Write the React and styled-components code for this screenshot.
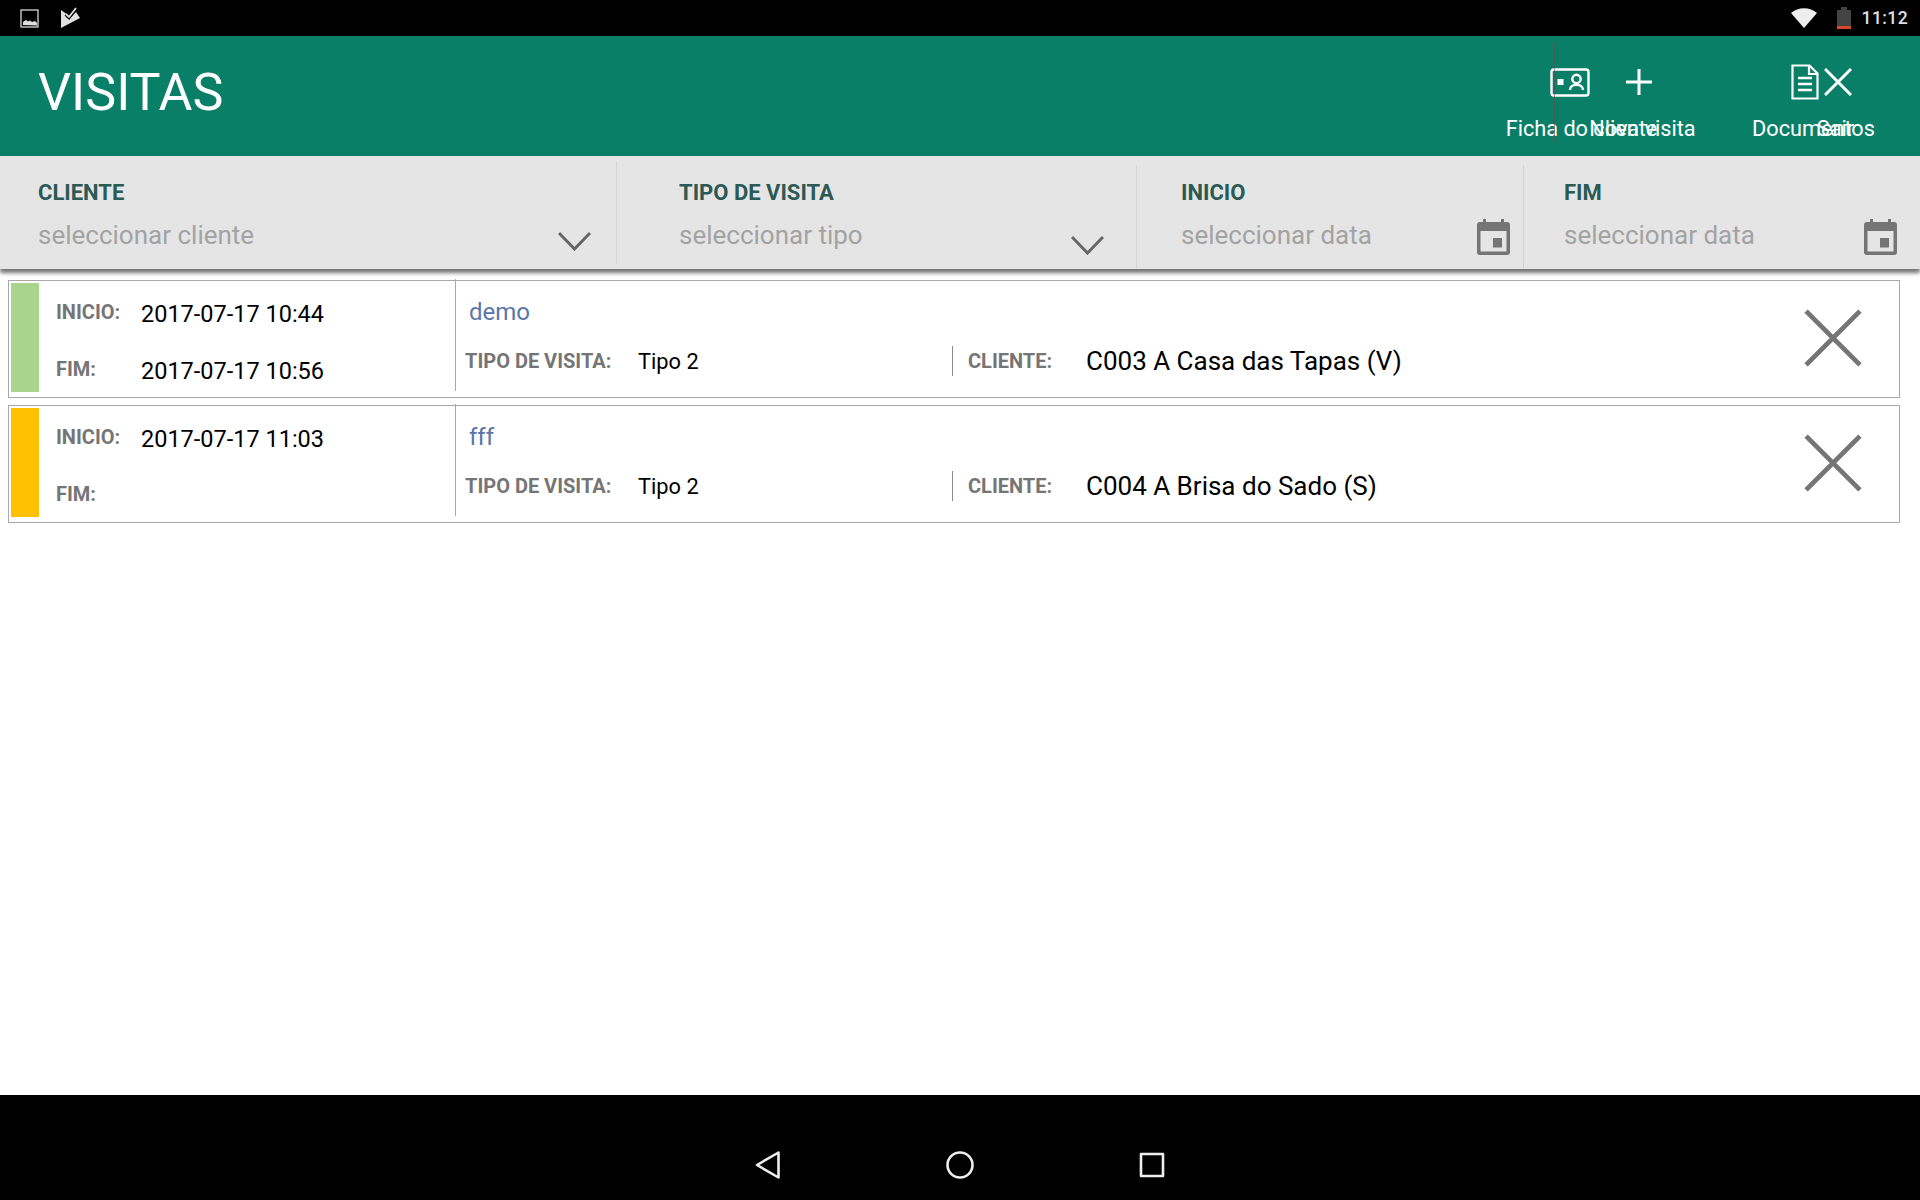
import React from 'react';
import styled, { createGlobalStyle } from 'styled-components';

const Global = createGlobalStyle`
  html, body { margin: 0; padding: 0; background: #fff; }
  * { box-sizing: border-box; }
`

const Screen = styled.div`
  width: 1920px;
  height: 1200px;
  display: flex;
  flex-direction: column;
  font-family: Roboto, sans-serif;
  background: #fff;
  overflow: hidden;
`

const StatusBar = styled.div`
  height: 36px;
  background: #000;
  display: flex;
  align-items: center;
  padding: 0 12px 0 20px;
  color: #e0e0e0;
`

const StatusLeft = styled.div`
  display: flex;
  align-items: center;
  gap: 21px;
  flex: 1;
`

const Clock = styled.span`
  font-size: 17.5px;
  font-weight: 500;
  margin-left: 11px;
  letter-spacing: 0.4px;
`

const Header = styled.header`
  position: relative;
  height: 120px;
  background: #0a7f68;
  display: flex;
  align-items: flex-start;
  color: #fff;
`

const Title = styled.h1`
  margin: 0;
  padding: 25px 0 0 38px;
  flex: 1;
  font-size: 52px;
  line-height: 64px;
  font-weight: 400;
`

const Seam = styled.div`
  position: absolute;
  left: 1554px;
  top: 6px;
  width: 1px;
  height: 100px;
  background: rgba(120, 60, 80, 0.55);
`

const Actions = styled.div`
  display: flex;
  padding-top: 28px;
  margin-right: 66px;
`

const Action = styled.div`
  width: ${p => p.$w}px;
  margin-right: ${p => p.$gap || 0}px;
  display: flex;
  flex-direction: column;
  align-items: center;
  font-size: 21.7px;
  line-height: 26px;
  white-space: nowrap;
`

const ActionIcon = styled.div`
  height: 52px;
  padding-top: ${p => p.$top}px;
  display: flex;
  align-items: flex-start;
  justify-content: center;
`

// the captions sit a little off-centre from their icons and run over each other
const Caption = styled.span`
  margin-left: ${p => Math.max(p.$shift * 2, 0)}px;
  margin-right: ${p => Math.max(-p.$shift * 2, 0)}px;
`

const FilterBar = styled.div`
  position: relative;
  height: 113px;
  background: #e5e5e5;
  display: flex;
  box-shadow: 0 4px 4px rgba(0, 0, 0, 0.55);
`

const Filter = styled.div`
  position: relative;
  width: ${p => p.$w}px;
  flex: ${p => (p.$w ? 'none' : 1)};
  padding: 24px 0 0 ${p => p.$pad}px;
  &::after {
    content: '';
    display: ${p => (p.$last ? 'none' : 'block')};
    position: absolute;
    right: 0;
    top: ${p => p.$lineTop}px;
    height: 103px;
    width: 1px;
    background: #d4d4d4;
  }
`

const FilterLabel = styled.div`
  font-size: 22px;
  line-height: 26px;
  font-weight: 700;
  color: #2b5a54;
`

const FilterValue = styled.div`
  margin-top: 11px;
  font-size: 26px;
  line-height: 36px;
  color: #a3a3a3;
`

const FilterIcon = styled.div`
  position: absolute;
  right: ${p => p.$right}px;
  top: ${p => p.$top}px;
  display: flex;
`

const List = styled.div`
  display: flex;
  flex-direction: column;
  gap: 7px;
  padding: 11px 20px 0 8px;
  flex: 1;
`

const Card = styled.div`
  height: 118px;
  border: 1.5px solid #a8a8a8;
  padding: 2px 0 5px 2px;
  display: flex;
`

const Status = styled.div`
  width: 28px;
  background: ${p => p.$color};
`

const Times = styled.div`
  position: relative;
  width: 417px;
  padding: 16px 0 0 17px;
  display: grid;
  grid-template-columns: 85px 1fr;
  grid-auto-rows: 57px;
  &::after {
    content: '';
    position: absolute;
    right: 0;
    top: -4px;
    bottom: 1px;
    width: 1px;
    background: #a8a8a8;
  }
`

const Label = styled.span`
  font-size: 20px;
  line-height: 26px;
  font-weight: 700;
  color: #757575;
  white-space: nowrap;
`

const TimeValue = styled.span`
  font-size: 23.5px;
  line-height: 30px;
  color: #000;
`

const Details = styled.div`
  flex: 1;
  padding: 13px 0 0 9px;
`

const Note = styled.div`
  padding-left: 4px;
  font-size: 24px;
  line-height: 32px;
  color: #5a76a8;
`

const InfoRow = styled.div`
  display: flex;
  align-items: center;
  margin-top: 18px;
  height: 30px;
`

const InfoLabel = styled(Label)`
  width: ${p => p.$w}px;
`

const TipoValue = styled.span`
  width: 315px;
  height: 100%;
  display: flex;
  align-items: center;
  font-size: 21.8px;
  color: #000;
  border-right: 1px solid #8a8a8a;
  margin-right: 15px;
`

const ClientValue = styled.span`
  font-size: 26px;
  color: #000;
`

const Remove = styled.div`
  width: 108px;
  display: flex;
  align-items: center;
  padding-left: 13px;
`

const NavBar = styled.nav`
  height: 105px;
  background: #000;
  display: flex;
  justify-content: center;
  gap: 162px;
  padding: 55px 0 0;
`

const ImageIcon = () => (
  <svg width="20" height="19" viewBox="0 0 20 19" fill="none">
    <rect x="1" y="1" width="17" height="17" stroke="#c8c8c8" strokeWidth="1.4" />
    <path d="M3 16v-3l3-2 2 1.5 2-1 2 1.5 3-1 2 2v2.5z" fill="#e0e0e0" />
  </svg>
)

const TaskIcon = () => (
  <svg width="20" height="22" viewBox="0 0 20 22" fill="none">
    <path d="M0 3l7 5-2 2 3 2 7-7 4 6L0 21z" fill="#e0e0e0" />
    <path d="M5 7l3 3 7-9" stroke="#000" strokeWidth="4" />
    <path d="M5 7l3 3 7-9" stroke="#e0e0e0" strokeWidth="1.8" />
  </svg>
)

const WifiIcon = () => (
  <svg width="26" height="20" viewBox="0 0 26 20">
    <path d="M0 5C7-1.5 19-1.5 26 5L13 20z" fill="#eee" />
  </svg>
)

const BatteryIcon = () => (
  <svg width="14" height="22" viewBox="0 0 14 22" style={{ marginLeft: 20 }}>
    <path d="M0 3h4V0h6v3h4v19H0z" fill="#444" />
    <rect y="19" width="14" height="3" fill="#d9472b" />
  </svg>
)

const CardIdIcon = () => (
  <svg width="40" height="29" viewBox="0 0 40 29" fill="none" stroke="#fff" strokeWidth="2.4">
    <rect x="1.5" y="1.5" width="37" height="26" rx="2.5" />
    <rect x="7.5" y="11" width="6" height="6" fill="#fff" stroke="none" />
    <circle cx="26.5" cy="11" r="4.2" />
    <path d="M20 22c0-7 13-7 13 0" />
  </svg>
)

const PlusIcon = () => (
  <svg width="28" height="28" viewBox="0 0 28 28" stroke="#fff" strokeWidth="3">
    <path d="M14 1v26M1 14h26" />
  </svg>
)

const DocIcon = () => (
  <svg width="28" height="36" viewBox="0 0 28 36" fill="none" stroke="#fff" strokeWidth="2.2">
    <path d="M1.5 1.5h17l8 8v25h-25z" />
    <path d="M18 2v8h8" />
    <path d="M7 14h14M7 20h14M7 26h14" strokeWidth="2.4" />
  </svg>
)

const CloseIcon = ({ size, stroke, width }) => (
  <svg width={size} height={size} viewBox="0 0 28 28" stroke={stroke} strokeWidth={width}>
    <path d="M1 1l26 26M27 1L1 27" />
  </svg>
)

const Chevron = () => (
  <svg width="33" height="20" viewBox="0 0 33 20" fill="none" stroke="#666" strokeWidth="3">
    <path d="M1 2l15.5 16L32 2" />
  </svg>
)

const CalendarIcon = () => (
  <svg width="33" height="36" viewBox="0 0 33 36">
    <path d="M6 0h3v3h15V0h3v3h3a3 3 0 0 1 3 3v27a3 3 0 0 1-3 3H3a3 3 0 0 1-3-3V6a3 3 0 0 1 3-3h3z" fill="#757575" />
    <rect x="3.5" y="12" width="26" height="20.5" fill="#e5e5e5" />
    <rect x="16" y="19" width="9" height="9.5" fill="#757575" />
  </svg>
)

const BackIcon = () => (
  <svg width="30" height="30" viewBox="0 0 30 30" fill="none" stroke="#eee" strokeWidth="2.6" strokeLinejoin="round">
    <path d="M25.5 2.5v25L4 15z" />
  </svg>
)

const HomeIcon = () => (
  <svg width="30" height="30" viewBox="0 0 30 30" fill="none" stroke="#eee" strokeWidth="2.6">
    <circle cx="15" cy="15" r="12.5" />
  </svg>
)

const RecentIcon = () => (
  <svg width="30" height="30" viewBox="0 0 30 30" fill="none" stroke="#eee" strokeWidth="2.6" strokeLinejoin="round">
    <rect x="4" y="4" width="22" height="22" />
  </svg>
)

const visits = [
  { id: 1, color: '#a9d48e', start: '2017-07-17 10:44', end: '2017-07-17 10:56', note: 'demo', type: 'Tipo 2', client: 'C003 A Casa das Tapas (V)' },
  { id: 2, color: '#ffc000', start: '2017-07-17 11:03', end: '', note: 'fff', type: 'Tipo 2', client: 'C004 A Brisa do Sado (S)' },
];

const App = () => {
  return (
    <Screen>
      <Global />
      <StatusBar>
        <StatusLeft>
          <ImageIcon />
          <TaskIcon />
        </StatusLeft>
        <WifiIcon />
        <BatteryIcon />
        <Clock>11:12</Clock>
      </StatusBar>
      <Header>
        <Title>VISITAS</Title>
        <Seam />
        <Actions>
          <Action $w={69}>
            <ActionIcon $top={4}><CardIdIcon /></ActionIcon>
            <Caption $shift={12}>Ficha do cliente</Caption>
          </Action>
          <Action $w={69} $gap={115}>
            <ActionIcon $top={4}><PlusIcon /></ActionIcon>
            <Caption $shift={4}>Nova visita</Caption>
          </Action>
          <Action $w={33}>
            <ActionIcon $top={0}><DocIcon /></ActionIcon>
            <Caption $shift={9}>Documentos</Caption>
          </Action>
          <Action $w={33}>
            <ActionIcon $top={4}><CloseIcon size={28} stroke="#fff" width={3} /></ActionIcon>
            <Caption $shift={-2}>Sair</Caption>
          </Action>
        </Actions>
      </Header>
      <FilterBar>
        <Filter $w={617} $pad={38} $lineTop={5}>
          <FilterLabel>CLIENTE</FilterLabel>
          <FilterValue>seleccionar cliente</FilterValue>
          <FilterIcon $right={26} $top={75}><Chevron /></FilterIcon>
        </Filter>
        <Filter $w={520} $pad={62} $lineTop={9}>
          <FilterLabel>TIPO DE VISITA</FilterLabel>
          <FilterValue>seleccionar tipo</FilterValue>
          <FilterIcon $right={33} $top={79}><Chevron /></FilterIcon>
        </Filter>
        <Filter $w={387} $pad={44} $lineTop={9}>
          <FilterLabel>INICIO</FilterLabel>
          <FilterValue>seleccionar data</FilterValue>
          <FilterIcon $right={14} $top={63}><CalendarIcon /></FilterIcon>
        </Filter>
        <Filter $pad={40} $last>
          <FilterLabel>FIM</FilterLabel>
          <FilterValue>seleccionar data</FilterValue>
          <FilterIcon $right={23} $top={63}><CalendarIcon /></FilterIcon>
        </Filter>
      </FilterBar>
      <List>
        {visits.map(v => (
          <Card key={v.id}>
            <Status $color={v.color} />
            <Times>
              <Label>INICIO:</Label>
              <TimeValue>{v.start}</TimeValue>
              <Label>FIM:</Label>
              <TimeValue>{v.end}</TimeValue>
            </Times>
            <Details>
              <Note>{v.note}</Note>
              <InfoRow>
                <InfoLabel $w={173}>TIPO DE VISITA:</InfoLabel>
                <TipoValue>{v.type}</TipoValue>
                <InfoLabel $w={118}>CLIENTE:</InfoLabel>
                <ClientValue>{v.client}</ClientValue>
              </InfoRow>
            </Details>
            <Remove><CloseIcon size={58} stroke="#757575" width={2.3} /></Remove>
          </Card>
        ))}
      </List>
      <NavBar>
        <BackIcon />
        <HomeIcon />
        <RecentIcon />
      </NavBar>
    </Screen>
  )
}

export default App;
